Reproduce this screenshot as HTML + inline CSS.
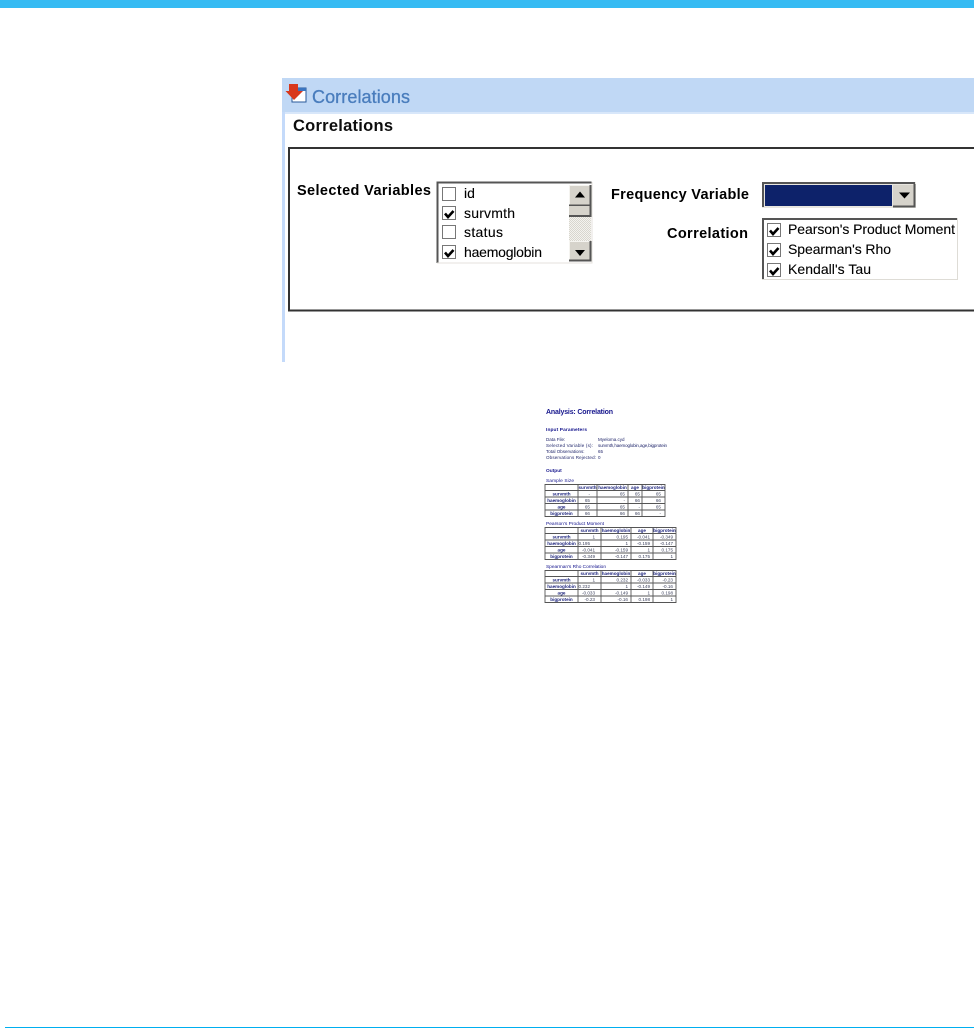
<!DOCTYPE html>
<html lang="en">
<head>
<meta charset="utf-8">
<title>Correlations</title>
<style>
html,body{margin:0;padding:0;background:#fff;width:974px;height:1028px;overflow:hidden}
svg{position:absolute;left:0;top:0;display:block}
text{font-family:"Liberation Sans",sans-serif}
.b{font-weight:bold;fill:#000;font-size:14.500px}
.r{fill:#000;stroke:#000;stroke-width:.1;font-size:14px}
.h{font-size:4.800px;font-weight:bold;fill:#14148c}
.p{font-size:4.500px;fill:#20256a}
.c{font-size:4.600px;fill:#404560;text-anchor:end}
.k{font-size:4.600px;font-weight:bold;fill:#20287f;text-anchor:middle}
.t{font-size:4.600px;font-weight:bold;fill:#20287f;text-anchor:middle}
.g{stroke:#555;stroke-width:.9;fill:none}
</style>
</head>
<body>
<svg width="974" height="1028" viewBox="0 0 974 1028" xmlns="http://www.w3.org/2000/svg">
<defs>
<filter id="s" x="-2%" y="-2%" width="104%" height="104%"><feGaussianBlur stdDeviation="0.3"/></filter>
<filter id="s2" x="-2%" y="-2%" width="104%" height="104%"><feGaussianBlur stdDeviation="0.34"/></filter>
<pattern id="d" width="2" height="2" patternUnits="userSpaceOnUse"><rect width="2" height="2" fill="#f4f3ef"/><rect width="1" height="1" fill="#d8d6ce"/><rect x="1" y="1" width="1" height="1" fill="#d8d6ce"/></pattern>
<g id="cb"><rect x=".5" y=".5" width="13" height="13" fill="#fff" stroke="#777" stroke-width="1"/></g>
<path id="tick" d="M3 7.500 L6 11 L11.500 5" fill="none" stroke="#000" stroke-width="2.600"/>
</defs>

<rect x="0" y="0" width="974" height="8" fill="#36bbf3"/>
<rect x="5" y="1027" width="969" height="1" fill="#00aeef"/>

<g filter="url(#s)">
  <rect x="282" y="78" width="692" height="34" fill="#c0d8f5"/>
  <rect x="282" y="112" width="692" height="2" fill="#d8e7fa"/>
  <rect x="282" y="112" width="3" height="250" fill="#c4dafa"/>

  <!-- title icon -->
  <rect x="292" y="88" width="14" height="14" fill="#fff" stroke="#2a5a9a" stroke-width="1"/>
  <rect x="292" y="88" width="14" height="3" fill="#3a75c0"/>
  <path d="M289 84 H298 V91 H303 L294 100 L285.500 91 H289 Z" fill="#d8381a"/>
  <text x="312" y="103" font-size="18" fill="#4a7dbd" stroke="#4a7dbd" stroke-width=".3" textLength="98" lengthAdjust="spacing">Correlations</text>
  <text x="293" y="131" font-size="16.500" font-weight="bold" fill="#111" textLength="100" lengthAdjust="spacing">Correlations</text>

  <!-- group box -->
  <path d="M974 148 H289 V310.500 H974" fill="none" stroke="#333" stroke-width="2"/>

  <text class="b" x="297" y="195" textLength="134" lengthAdjust="spacing">Selected Variables</text>

  <!-- variable list -->
  <rect x="437" y="182" width="155" height="81" fill="#fff"/>
  <path d="M437.500 263 V182.500 H591.500" fill="none" stroke="#555" stroke-width="2"/>
  <path d="M437 263 H592 V182" fill="none" stroke="#e4e2dc" stroke-width="1"/>
  <use href="#cb" x="442" y="187"/>
  <use href="#cb" x="442" y="206"/><use href="#tick" x="442" y="206"/>
  <use href="#cb" x="442" y="225"/>
  <use href="#cb" x="442" y="245"/><use href="#tick" x="442" y="245"/>
  <text class="r" x="464" y="198">id</text>
  <text class="r" x="464" y="218" textLength="51" lengthAdjust="spacing">survmth</text>
  <text class="r" x="464" y="237" textLength="39" lengthAdjust="spacing">status</text>
  <text class="r" x="464" y="257" textLength="78" lengthAdjust="spacing">haemoglobin</text>

  <!-- scrollbar -->
  <rect x="569" y="185" width="22" height="76" fill="url(#d)"/>
  <rect x="569" y="185" width="21" height="20" fill="#d6d3cb"/>
  <path d="M569.500 205 V185.500 H590" fill="none" stroke="#f5f4f0" stroke-width="1"/>
  <path d="M590.500 185 V205.500 H569" fill="none" stroke="#555" stroke-width="2"/>
  <path d="M575 197.500 L580 191.500 L585 197.500 Z" fill="#000"/>
  <rect x="569" y="206" width="21" height="10" fill="#d6d3cb"/>
  <path d="M590.500 206 V216 H569" fill="none" stroke="#555" stroke-width="2"/>
  <rect x="569" y="241" width="21" height="20" fill="#d6d3cb"/>
  <path d="M569.500 261 V241.500 H590" fill="none" stroke="#f5f4f0" stroke-width="1"/>
  <path d="M590.500 241 V260.500 H569" fill="none" stroke="#555" stroke-width="2"/>
  <path d="M575 250 L580 256 L585 250 Z" fill="#000"/>

  <text class="b" x="611" y="199" textLength="138" lengthAdjust="spacing">Frequency Variable</text>

  <!-- combo -->
  <rect x="762" y="182" width="154" height="26" fill="#e8e6e0"/>
  <path d="M763 207 V183 H915" fill="none" stroke="#555" stroke-width="2"/>
  <rect x="765" y="185" width="127" height="21" fill="#0a246a"/>
  <rect x="893" y="185" width="21" height="21" fill="#d6d3cb"/>
  <path d="M914.500 184 V206.500 H893" fill="none" stroke="#555" stroke-width="2"/>
  <path d="M899 192.500 L904.500 198.500 L910 192.500 Z" fill="#000"/>

  <text class="b" x="667" y="238" textLength="81" lengthAdjust="spacing">Correlation</text>

  <!-- correlation list -->
  <rect x="762" y="218" width="196" height="62" fill="#fff"/>
  <path d="M763 280 V219 H958" fill="none" stroke="#555" stroke-width="2"/>
  <path d="M762 279.500 H957.500 V218" fill="none" stroke="#dedcd6" stroke-width="1"/>
  <use href="#cb" x="767" y="223"/><use href="#tick" x="767" y="223"/>
  <use href="#cb" x="767" y="243"/><use href="#tick" x="767" y="243"/>
  <use href="#cb" x="767" y="263"/><use href="#tick" x="767" y="263"/>
  <text class="r" x="788" y="234" textLength="167" lengthAdjust="spacing">Pearson's Product Moment</text>
  <text class="r" x="788" y="254" textLength="103" lengthAdjust="spacing">Spearman's Rho</text>
  <text class="r" x="788" y="274" textLength="83" lengthAdjust="spacing">Kendall's Tau</text>
</g>

<!-- report thumbnail -->
<g filter="url(#s2)">
  <text x="546" y="414" font-size="7" font-weight="bold" fill="#14148c" textLength="67" lengthAdjust="spacing">Analysis: Correlation</text>
  <text class="h" x="546" y="431" textLength="41" lengthAdjust="spacing">Input Parameters</text>
  <text class="p" x="546" y="441">Data File:</text>
  <text class="p" x="598" y="441">Myeloma.cyd</text>
  <text class="p" x="546" y="447" textLength="47" lengthAdjust="spacing">Selected Variable (s):</text>
  <text class="p" x="598" y="447" textLength="69" lengthAdjust="spacing">survmth,haemoglobin,age,bigprotein</text>
  <text class="p" x="546" y="453">Total Observations:</text>
  <text class="p" x="598" y="453">65</text>
  <text class="p" x="546" y="459" textLength="50" lengthAdjust="spacing">Observations Rejected:</text>
  <text class="p" x="598" y="459">0</text>
  <text class="h" x="546" y="472">Output</text>
  <text class="h" style="font-weight:normal" x="546" y="482" textLength="28" lengthAdjust="spacing">Sample Size</text>

  <path class="g" d="M545 484.500H665M545 490.500H665M545 497H665M545 503.500H665M545 510H665M545 516.500H665M545 484V517M578 484V517M597 484V517M628 484V517M642 484V517M665 484V517"/>
  <text class="t" x="587.500" y="489">survmth</text><text class="t" x="612.500" y="489">haemoglobin</text><text class="t" x="635" y="489">age</text><text class="t" x="653.500" y="489">bigprotein</text>
  <text class="k" x="561.500" y="495.500">survmth</text><text class="c" x="590" y="495.500">-</text><text class="c" x="625" y="495.500">65</text><text class="c" x="640" y="495.500">65</text><text class="c" x="661" y="495.500">65</text>
  <text class="k" x="561.500" y="502">haemoglobin</text><text class="c" x="590" y="502">65</text><text class="c" x="625" y="502">-</text><text class="c" x="640" y="502">66</text><text class="c" x="661" y="502">66</text>
  <text class="k" x="561.500" y="508.500">age</text><text class="c" x="590" y="508.500">65</text><text class="c" x="625" y="508.500">65</text><text class="c" x="640" y="508.500">-</text><text class="c" x="661" y="508.500">65</text>
  <text class="k" x="561.500" y="515">bigprotein</text><text class="c" x="590" y="515">66</text><text class="c" x="625" y="515">66</text><text class="c" x="640" y="515">66</text><text class="c" x="661" y="515">-</text>

  <text class="h" style="font-weight:normal" x="546" y="525" textLength="58" lengthAdjust="spacing">Pearson's Product Moment</text>
  <path class="g" d="M545 527.500H676M545 533.500H676M545 540H676M545 546.500H676M545 553H676M545 559.500H676M545 527V560M578 527V560M601 527V560M631 527V560M653 527V560M676 527V560"/>
  <text class="t" x="589.500" y="532">survmth</text><text class="t" x="616" y="532">haemoglobin</text><text class="t" x="642" y="532">age</text><text class="t" x="664.500" y="532">bigprotein</text>
  <text class="k" x="561.500" y="538.500">survmth</text><text class="c" x="595" y="538.500">1</text><text class="c" x="628" y="538.500">0.195</text><text class="c" x="650" y="538.500">-0.041</text><text class="c" x="673" y="538.500">-0.349</text>
  <text class="k" x="561.500" y="545">haemoglobin</text><text class="c" x="590" y="545">0.195</text><text class="c" x="628" y="545">1</text><text class="c" x="650" y="545">-0.159</text><text class="c" x="673" y="545">-0.147</text>
  <text class="k" x="561.500" y="551.500">age</text><text class="c" x="595" y="551.500">-0.041</text><text class="c" x="628" y="551.500">-0.159</text><text class="c" x="650" y="551.500">1</text><text class="c" x="673" y="551.500">0.175</text>
  <text class="k" x="561.500" y="558">bigprotein</text><text class="c" x="595" y="558">-0.349</text><text class="c" x="628" y="558">-0.147</text><text class="c" x="650" y="558">0.175</text><text class="c" x="673" y="558">1</text>

  <text class="h" style="font-weight:normal" x="546" y="568" textLength="60" lengthAdjust="spacing">Spearman's Rho Correlation</text>
  <path class="g" d="M545 570.500H676M545 576.500H676M545 583H676M545 589.500H676M545 596H676M545 602.500H676M545 570V603M578 570V603M601 570V603M631 570V603M653 570V603M676 570V603"/>
  <text class="t" x="589.500" y="575">survmth</text><text class="t" x="616" y="575">haemoglobin</text><text class="t" x="642" y="575">age</text><text class="t" x="664.500" y="575">bigprotein</text>
  <text class="k" x="561.500" y="581.500">survmth</text><text class="c" x="595" y="581.500">1</text><text class="c" x="628" y="581.500">0.232</text><text class="c" x="650" y="581.500">-0.033</text><text class="c" x="673" y="581.500">-0.23</text>
  <text class="k" x="561.500" y="588">haemoglobin</text><text class="c" x="590" y="588">0.232</text><text class="c" x="628" y="588">1</text><text class="c" x="650" y="588">-0.149</text><text class="c" x="673" y="588">-0.16</text>
  <text class="k" x="561.500" y="594.500">age</text><text class="c" x="595" y="594.500">-0.033</text><text class="c" x="628" y="594.500">-0.149</text><text class="c" x="650" y="594.500">1</text><text class="c" x="673" y="594.500">0.198</text>
  <text class="k" x="561.500" y="601">bigprotein</text><text class="c" x="595" y="601">-0.23</text><text class="c" x="628" y="601">-0.16</text><text class="c" x="650" y="601">0.198</text><text class="c" x="673" y="601">1</text>
</g>
</svg>
</body>
</html>
